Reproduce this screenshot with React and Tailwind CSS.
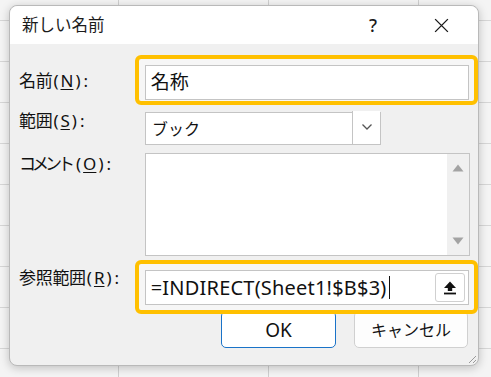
import React from "react";

const font = "font-['Noto_Sans','Noto_Sans_CJK_JP',sans-serif]";

function Label({ children, k, kana }) {
  return (
    <span className="text-[17px] leading-[20px] text-[#111] whitespace-nowrap inline-flex items-baseline">
      <span className={kana ? "tracking-[-4px] mr-[4px]" : "tracking-[-0.3px]"}>{children}</span>
      <span className="ml-[1px]">(</span>
      <span className="underline underline-offset-2 mx-[2px]">{k}</span>
      <span>)</span>
      <span className="ml-[3px]">:</span>
    </span>
  );
}

function UploadIcon() {
  return (
    <svg width="16" height="16" viewBox="0 0 16 16">
      <path d="M8 1.5 L14 8 L10.2 8 L10.2 11 L5.8 11 L5.8 8 L2 8 Z" fill="#111" />
      <rect x="2" y="12.6" width="12" height="1.8" fill="#111" />
    </svg>
  );
}

export default function App() {
  return (
    <div
      className={`relative w-[491px] h-[377px] overflow-hidden bg-[#f4f4f4] ${font} [background-image:linear-gradient(to_right,#cfcfcf_1px,transparent_1px),linear-gradient(to_bottom,#d6d6d6_1px,transparent_1px)] [background-size:150px_41px] [background-position:118px_20px]`}
    >
      <div className="absolute left-[9px] top-[5px] w-[470px] h-[361px] rounded-[8px] border border-[#b9b9b9] bg-[#f0f0f0] shadow-[0_2px_10px_rgba(0,0,0,0.22)] flex flex-col">
        {/* title bar */}
        <div className="h-[38px] shrink-0 bg-white rounded-t-[8px] flex items-center pl-[12px]">
          <span className="text-[16.5px] text-[#1b1b1b]">新しい名前</span>
          <span className="ml-auto w-[14px] text-center text-[18px] font-medium text-[#1b1b1b] mr-[53px]">?</span>
          <svg width="17" height="17" viewBox="0 0 16 16" className="mr-[28px]">
            <path d="M2 2 L14 14 M14 2 L2 14" stroke="#1b1b1b" strokeWidth="1.3" />
          </svg>
        </div>

        {/* body */}
        <div className="flex flex-col pt-[11px] relative flex-1">
          {/* name row */}
          <div className="flex items-start h-[50px]">
            <div className="w-[125px] pl-[9px] pt-[14px]">
              <Label k="N">名前</Label>
            </div>
            <div className="relative z-10 w-[344px] h-[50px] border-[4px] border-[#ffc000] rounded-[6px] bg-[#f6f6f6] pl-[6px] pr-[5px] pt-[6px]">
              <div className="h-[35px] bg-white border border-[#c4c4c4] flex items-center pl-[5px]">
                <span className="text-[19px] text-[#111]">名称</span>
              </div>
            </div>
          </div>

          {/* scope row */}
          <div className="flex items-start mt-[7px]">
            <div className="w-[135px] pl-[9px] -mt-[3px]">
              <Label k="S">範囲</Label>
            </div>
            <div className="w-[236px] h-[33px] bg-white border border-[#c4c4c4] flex items-center">
              <span className="pl-[6px] text-[16px] text-[#111]">ブック</span>
              <div className="ml-auto h-[34px] -mt-[2px] w-[28px] border-l border-[#c4c4c4] border-b bg-white flex items-center justify-center">
                <svg width="12" height="8" viewBox="0 0 12 8">
                  <path d="M1.5 1.5 L6 6 L10.5 1.5" stroke="#555" strokeWidth="1.3" fill="none" />
                </svg>
              </div>
            </div>
          </div>

          {/* comment row */}
          <div className="flex items-start mt-[8px]">
            <div className="w-[135px] pl-[9px] -mt-[1px]">
              <Label k="O" kana>コメント</Label>
            </div>
            <div className="w-[325px] h-[103px] bg-white border border-[#c4c4c4] flex">
              <div className="flex-1" />
              <div className="w-[22px] bg-[#f0f0f0] flex flex-col items-center justify-between py-[10px]">
                <svg width="12" height="8" viewBox="0 0 12 8">
                  <path d="M6 0.5 L11.5 7.5 L0.5 7.5 Z" fill="#a3a3a3" />
                </svg>
                <svg width="12" height="8" viewBox="0 0 12 8">
                  <path d="M6 7.5 L11.5 0.5 L0.5 0.5 Z" fill="#a3a3a3" />
                </svg>
              </div>
            </div>
          </div>

          {/* ref row */}
          <div className="flex items-start mt-[4px]">
            <div className="w-[125px] pl-[9px] pt-[6px]">
              <Label k="R">参照範囲</Label>
            </div>
            <div className="relative z-10 w-[344px] h-[54px] border-[4px] border-[#ffc000] rounded-[6px] bg-[#f6f6f6] pl-[6px] pr-[5px] pt-[6px]">
              <div className="h-[35px] bg-white border border-[#c4c4c4] flex items-center pl-[5px] pr-[3px]">
                <span className="text-[20px] text-[#111] tracking-[0.2px]">=INDIRECT(Sheet1!$B$3)</span>
                <span className="w-[1.5px] h-[23px] bg-[#111] ml-[2px]" />
                <div className="ml-auto w-[30px] h-[29px] bg-white border border-[#d0d0d0] rounded-[3px] flex items-center justify-center">
                  <UploadIcon />
                </div>
              </div>
            </div>
          </div>

          {/* buttons */}
          <div className="flex justify-end gap-[18px] pr-[10px] -mt-[3px]">
            <div className="w-[115px] h-[37px] bg-white border-[1.5px] border-[#1a73c8] rounded-[5px] flex items-center justify-center pt-[1px]">
              <span className="text-[19px] text-[#111]">OK</span>
            </div>
            <div className="w-[114px] h-[37px] bg-[#fdfdfd] border border-[#d0d0d0] rounded-[5px] flex items-center justify-center pt-[1px]">
              <span className="text-[16px] text-[#111]">キャンセル</span>
            </div>
          </div>

          {/* resize grip */}
          <svg width="12" height="12" viewBox="0 0 12 12" className="absolute right-[1px] bottom-[1px]">
            <path d="M11 4 L4 11 M11 8 L8 11" stroke="#9a9a9a" strokeWidth="1" />
          </svg>
        </div>
      </div>
    </div>
  );
}
